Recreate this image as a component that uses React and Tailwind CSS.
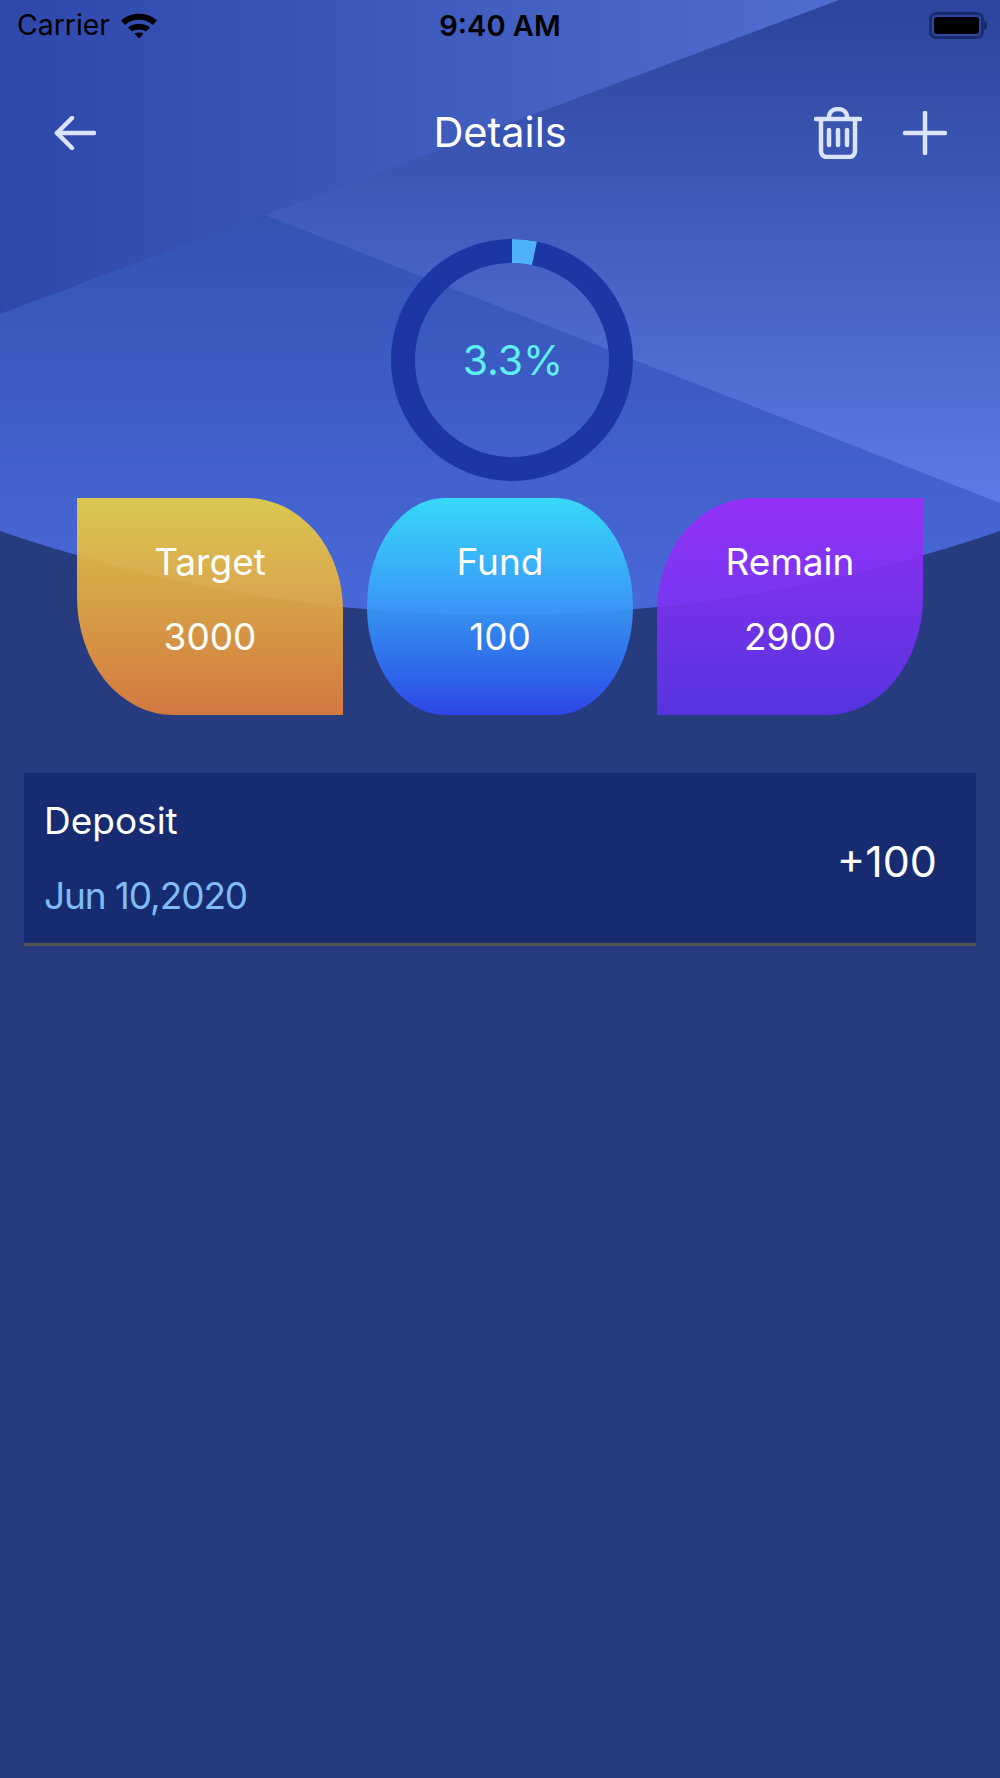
import React from "react";

const stats = [
  {
    label: "Target",
    value: "3000",
    shape:
      "rounded-tr-[96px_112px] rounded-bl-[96px_118px] from-[#ead342]/90 to-[#e57f3b]/90",
  },
  {
    label: "Fund",
    value: "100",
    shape: "rounded-[78px/108px] from-[#36e6fc]/90 via-[#3a9cfb]/90 to-[#3046f1]/90",
  },
  {
    label: "Remain",
    value: "2900",
    shape:
      "rounded-tl-[96px_112px] rounded-br-[96px_118px] from-[#9d2afc]/90 to-[#5a32ea]/90",
  },
];

const WifiIcon = () => (
  <svg width="38" height="28" viewBox="0 0 38 28" fill="none">
    <path d="M1 9.5C10.5 0.5 27.5 0.5 37 9.5L33 14C25.5 7 12.5 7 5 14Z" fill="#000" />
    <path d="M8 16.5C14 11.5 24 11.5 30 16.5L26 20.5C22.5 17.8 15.5 17.8 12 20.5Z" fill="#000" />
    <path d="M14.5 22.5C17 21 21 21 23.5 22.5L19 27.5Z" fill="#000" />
  </svg>
);

const BatteryIcon = () => (
  <div className="flex items-center">
    <div className="w-[55px] h-[27px] rounded-[7px] border-[3px] border-[#1b2c6e] p-[2px]">
      <div className="w-full h-full bg-black rounded-[3px]" />
    </div>
    <div className="w-[3px] h-[9px] bg-[#1b2c6e] rounded-r-full" />
  </div>
);

const BackIcon = () => (
  <svg width="42" height="34" viewBox="0 0 42 34" fill="none" stroke="#dbe4ff" strokeWidth="4.5" strokeLinecap="round" strokeLinejoin="round">
    <path d="M40 17H3" />
    <path d="M18 2L3 17L18 32" />
  </svg>
);

const TrashIcon = () => (
  <svg width="48" height="52" viewBox="0 0 48 52" fill="none" stroke="#dbe4ff" strokeWidth="4.5" strokeLinecap="round" strokeLinejoin="round">
    <path d="M2 12H46" />
    <path d="M7 13V44C7 47.5 9.5 50 13 50H35C38.5 50 41 47.5 41 44V13" />
    <path d="M15 11V10C15 5 19 2 24 2C29 2 33 5 33 10V11" />
    <path d="M15 23V38" />
    <path d="M24 23V38" />
    <path d="M33 23V38" />
  </svg>
);

const PlusIcon = () => (
  <svg width="44" height="44" viewBox="0 0 44 44" fill="none" stroke="#dbe4ff" strokeWidth="4.5" strokeLinecap="round">
    <path d="M22 2V42" />
    <path d="M2 22H42" />
  </svg>
);

const ProgressRing = () => {
  const radius = 109;
  const length = 2 * Math.PI * radius;
  return (
    <svg width="242" height="242" viewBox="0 0 242 242" fill="none">
      <circle cx="121" cy="121" r={radius} stroke="#1c37a3" strokeWidth="24" />
      <circle
        cx="121"
        cy="121"
        r={radius}
        stroke="#4fb0fb"
        strokeWidth="24"
        strokeDasharray={`${length * 0.033} ${length}`}
        transform="rotate(-90 121 121)"
      />
    </svg>
  );
};

export default function App() {
  return (
    <div className="relative w-full min-h-[1778px] bg-[#273b7f] font-['Inter',sans-serif] text-white overflow-hidden">
      {/* HEADER BACKGROUND */}
      <div className="absolute top-0 left-0 w-full h-[620px] [clip-path:circle(1530px_at_50%_-915px)]">
        <div className="absolute inset-0 bg-linear-to-b from-[#3152b2] from-[30%] to-[#4a69da]" />
        <div className="absolute inset-0 bg-linear-to-b from-[#2c449c] to-[#5c7be6] to-[81%] [clip-path:polygon(839px_0,1000px_0,1000px_503px,265px_215px)]" />
        <div className="absolute inset-0 bg-linear-to-r from-[#2e47ab] to-[#4e6ccd] to-[80%] [clip-path:polygon(0_0,839px_0,0_314px)]" />
      </div>

      <div className="relative flex flex-col">
        {/* STATUS BAR */}
        <div className="relative h-[50px] flex items-center justify-between pl-[17px] pr-[13px] text-black">
          <div className="flex items-center gap-[10px]">
            <span className="text-[28.4px] leading-none">Carrier</span>
            <WifiIcon />
          </div>
          <span className="absolute left-0 right-0 text-center text-[29px] font-semibold leading-none">9:40 AM</span>
          <BatteryIcon />
        </div>

        {/* NAV */}
        <div className="relative h-[84px] mt-[41px] flex items-center pl-[54px] pr-[53px]">
          <BackIcon />
          <span className="absolute left-0 right-0 text-center text-[41.5px] leading-none">Details</span>
          <div className="ml-auto flex items-center gap-[41px]">
            <TrashIcon />
            <PlusIcon />
          </div>
        </div>

        {/* RING */}
        <div className="relative w-[242px] h-[242px] ml-[391px] mt-[64px]">
          <ProgressRing />
          <div className="absolute inset-0 pt-[2px] pl-[2px] flex items-center justify-center text-[41px] text-[#5ff0f5]">3.3%</div>
        </div>

        {/* STAT CARDS */}
        <div className="flex justify-between px-[77px] mt-[17px]">
          {stats.map((stat) => (
            <div
              key={stat.label}
              className={`w-[266px] h-[217px] pt-[26px] flex flex-col items-center text-[37px] leading-[75px] bg-linear-to-b ${stat.shape}`}
            >
              <span>{stat.label}</span>
              <span>{stat.value}</span>
            </div>
          ))}
        </div>

        {/* TRANSACTION */}
        <div className="mx-[24px] mt-[58px] h-[173px] flex items-center justify-between pl-[20px] pr-[39px] bg-[#172c70] border-b-[3px] border-[#55574f]">
          <div className="flex flex-col text-[37px] leading-[75px]">
            <span>Deposit</span>
            <span className="text-[#7fbcf5] tracking-[-1.1px]">Jun 10,2020</span>
          </div>
          <span className="text-[43px] mt-[6px]">+100</span>
        </div>
      </div>
    </div>
  );
}
